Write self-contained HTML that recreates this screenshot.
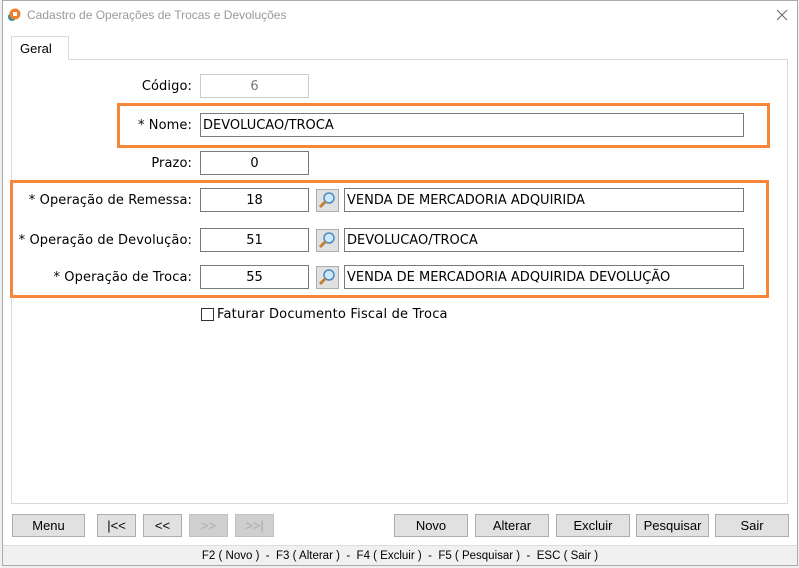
<!DOCTYPE html>
<html><head><meta charset="utf-8"><style>
*{box-sizing:border-box;margin:0;padding:0}
body{width:799px;height:568px;background:#f0f0f0;position:relative;overflow:hidden;font-family:"DejaVu Sans",sans-serif;font-size:13px;color:#000}
.abs{position:absolute}
.win{left:2px;top:0;width:796px;height:566px;background:#fff;border:1px solid #aaa}
.title{left:27px;top:8px;font-family:"Liberation Sans",sans-serif;font-size:12px;color:#999}
.panel{left:11px;top:59px;width:777px;height:445px;border:1px solid #d9d9d9;background:#fff}
.tab{left:11px;top:36px;width:58px;height:24px;border:1px solid #d9d9d9;border-bottom:none;background:#fff;font-family:"Liberation Sans",sans-serif;font-size:13px;padding:4px 0 0 8px}
.lbl{text-align:right;width:190px;left:2px;letter-spacing:0.1px}
.inp{border:1px solid #7a7a7a;height:24px;background:#fff;line-height:23px;padding-left:2px}
.num{text-align:center;padding:0}
.or{border:3px solid #f5863a}
.mag{width:23px;height:23px;border:1px solid #adadad;background:#e1e1e1}
.btn{top:514px;height:23px;border:1px solid #adadad;background:#e1e1e1;font-family:"Liberation Sans",sans-serif;font-size:13px;text-align:center;line-height:21px}
.dis{color:#aaa;background:#cfcfcf;border-color:#bfbfbf}
.status{left:3px;top:545px;width:794px;height:20px;background:#f0f0f0;border-top:1px solid #ddd;font-family:"Liberation Sans",sans-serif;font-size:11.5px;text-align:center;line-height:20px}
</style></head><body>
<div class="abs win"></div>
<svg class="abs" style="left:7px;top:8px" width="14" height="14"><circle cx="5" cy="9" r="4" fill="#3a8fa0"/><circle cx="8" cy="6" r="5.5" fill="#f08030"/><rect x="6" y="4" width="4" height="4" fill="#fff"/></svg>
<div class="abs title">Cadastro de Operações de Trocas e Devoluções</div>
<svg class="abs" style="left:776px;top:9px" width="12" height="12"><path d="M1 1L11 11M11 1L1 11" stroke="#666" stroke-width="1"/></svg>
<div class="abs panel"></div>
<div class="abs tab">Geral</div>

<div class="abs lbl" style="top:79px">Código:</div>
<div class="abs inp num" style="left:200px;top:74px;width:109px;color:#777;border-color:#ccc">6</div>

<div class="abs or" style="left:117px;top:103px;width:653px;height:45px"></div>
<div class="abs lbl" style="top:118px">* Nome:</div>
<div class="abs inp" style="left:200px;top:113px;width:544px">DEVOLUCAO/TROCA</div>

<div class="abs lbl" style="top:156px">Prazo:</div>
<div class="abs inp num" style="left:200px;top:151px;width:109px">0</div>

<div class="abs or" style="left:10px;top:180px;width:759px;height:118px"></div>
<div class="abs lbl" style="top:193px">* Operação de Remessa:</div>
<div class="abs inp num" style="left:200px;top:188px;width:109px">18</div>
<div class="abs inp" style="left:344px;top:188px;width:400px">VENDA DE MERCADORIA ADQUIRIDA</div>
<div class="abs lbl" style="top:233px">* Operação de Devolução:</div>
<div class="abs inp num" style="left:200px;top:228px;width:109px">51</div>
<div class="abs inp" style="left:344px;top:228px;width:400px">DEVOLUCAO/TROCA</div>
<div class="abs lbl" style="top:270px">* Operação de Troca:</div>
<div class="abs inp num" style="left:200px;top:265px;width:109px">55</div>
<div class="abs inp" style="left:344px;top:265px;width:400px">VENDA DE MERCADORIA ADQUIRIDA DEVOLUÇÃO</div>

<div class="abs mag" style="left:316px;top:189px"><svg width="21" height="21"><circle cx="12" cy="8" r="5" fill="#cfe8fb" stroke="#4a8ac0" stroke-width="1.5"/><path d="M8.5 11.5L3 17" stroke="#c08030" stroke-width="3"/></svg></div>
<div class="abs mag" style="left:316px;top:229px"><svg width="21" height="21"><circle cx="12" cy="8" r="5" fill="#cfe8fb" stroke="#4a8ac0" stroke-width="1.5"/><path d="M8.5 11.5L3 17" stroke="#c08030" stroke-width="3"/></svg></div>
<div class="abs mag" style="left:316px;top:266px"><svg width="21" height="21"><circle cx="12" cy="8" r="5" fill="#cfe8fb" stroke="#4a8ac0" stroke-width="1.5"/><path d="M8.5 11.5L3 17" stroke="#c08030" stroke-width="3"/></svg></div>

<div class="abs" style="left:201px;top:308px;width:13px;height:13px;border:1px solid #333;background:#fff"></div>
<div class="abs" style="left:217px;top:307px;letter-spacing:0.2px">Faturar Documento Fiscal de Troca</div>

<div class="abs btn" style="left:12px;width:73px">Menu</div>
<div class="abs btn" style="left:97px;width:39px">|&lt;&lt;</div>
<div class="abs btn" style="left:143px;width:39px">&lt;&lt;</div>
<div class="abs btn dis" style="left:189px;width:39px">&gt;&gt;</div>
<div class="abs btn dis" style="left:235px;width:39px">&gt;&gt;|</div>
<div class="abs btn" style="left:394px;width:74px">Novo</div>
<div class="abs btn" style="left:475px;width:74px">Alterar</div>
<div class="abs btn" style="left:556px;width:74px">Excluir</div>
<div class="abs btn" style="left:636px;width:73px">Pesquisar</div>
<div class="abs btn" style="left:715px;width:74px">Sair</div>

<div class="abs status">F2 ( Novo )&nbsp; - &nbsp;F3 ( Alterar )&nbsp; - &nbsp;F4 ( Excluir )&nbsp; - &nbsp;F5 ( Pesquisar )&nbsp; - &nbsp;ESC ( Sair )</div>
</body></html>
